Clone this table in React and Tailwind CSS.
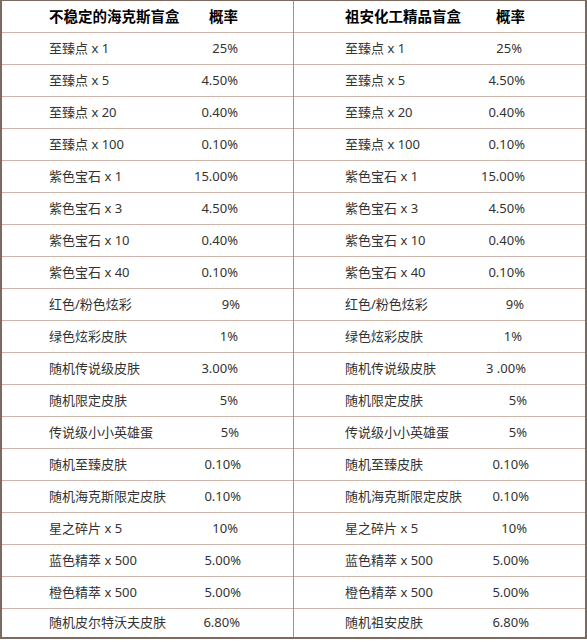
import React from 'react';

// [label, pct, right-edge tweak]
const leftRows = [
  ['至臻点 x 1', '25%', ''],
  ['至臻点 x 5', '4.50%', ''],
  ['至臻点 x 20', '0.40%', ''],
  ['至臻点 x 100', '0.10%', ''],
  ['紫色宝石 x 1', '15.00%', ''],
  ['紫色宝石 x 3', '4.50%', ''],
  ['紫色宝石 x 10', '0.40%', ''],
  ['紫色宝石 x 40', '0.10%', ''],
  ['红色/粉色炫彩', '9%', '-mr-[2px]'],
  ['绿色炫彩皮肤', '1%', ''],
  ['随机传说级皮肤', '3.00%', ''],
  ['随机限定皮肤', '5%', ''],
  ['传说级小小英雄蛋', '5%', '-mr-[1px]'],
  ['随机至臻皮肤', '0.10%', '-mr-[3px]'],
  ['随机海克斯限定皮肤', '0.10%', '-mr-[3px]'],
  ['星之碎片 x 5', '10%', ''],
  ['蓝色精萃 x 500', '5.00%', '-mr-[3px]'],
  ['橙色精萃 x 500', '5.00%', '-mr-[3px]'],
  ['随机皮尔特沃夫皮肤', '6.80%', '-mr-[2px]'],
];

const rightRows = [
  ['至臻点 x 1', '25%', 'mr-[3px]'],
  ['至臻点 x 5', '4.50%', ''],
  ['至臻点 x 20', '0.40%', ''],
  ['至臻点 x 100', '0.10%', ''],
  ['紫色宝石 x 1', '15.00%', ''],
  ['紫色宝石 x 3', '4.50%', ''],
  ['紫色宝石 x 10', '0.40%', ''],
  ['紫色宝石 x 40', '0.10%', ''],
  ['红色/粉色炫彩', '9%', 'mr-[1px]'],
  ['绿色炫彩皮肤', '1%', 'mr-[3px]'],
  ['随机传说级皮肤', '3 .00%', '-mr-[1px]'],
  ['随机限定皮肤', '5%', '-mr-[2px]'],
  ['传说级小小英雄蛋', '5%', '-mr-[2px]'],
  ['随机至臻皮肤', '0.10%', '-mr-[4px]'],
  ['随机海克斯限定皮肤', '0.10%', '-mr-[4px]'],
  ['星之碎片 x 5', '10%', '-mr-[2px]'],
  ['蓝色精萃 x 500', '5.00%', '-mr-[4px]'],
  ['橙色精萃 x 500', '5.00%', '-mr-[4px]'],
  ['随机祖安皮肤', '6.80%', '-mr-[4px]'],
];

function OddsTable({ title, rows, padL, padR }) {
  return (
    <div className="flex flex-col">
      <div className={`flex items-center h-[32px] border-b border-[#ccb5aa] ${padL} ${padR}`}>
        <span className="flex-1 text-[14.5px] font-bold text-black">{title}</span>
        <span className="text-[14.5px] font-bold text-black">概率</span>
      </div>
      {rows.map(([label, pct, adj], i) => (
        <div
          key={i}
          className={`flex items-center ${padL} ${padR} ${
            i === rows.length - 1 ? 'h-[28px]' : 'h-[32px] border-b border-[#ccb5aa]'
          }`}
        >
          <span className="flex-1 text-[13px] text-[#333]">{label}</span>
          <span className={`text-[13px] text-[#333] whitespace-pre ${adj}`}>{pct}</span>
        </div>
      ))}
    </div>
  );
}

export default function App() {
  return (
    <div
      className="w-[587px] h-[642px] bg-white overflow-hidden"
      style={{ fontFamily: '"Noto Sans", "Noto Sans CJK SC", sans-serif' }}
    >
      <div className="w-[587px] border-2 border-t border-[#7d6a5e] grid grid-cols-[291px_1px_291px]">
        <OddsTable title="不稳定的海克斯盲盒" rows={leftRows} padL="pl-[47px]" padR="pr-[55px]" />
        <div className="bg-[#a0938e]" />
        <OddsTable title="祖安化工精品盲盒" rows={rightRows} padL="pl-[51px]" padR="pr-[60px]" />
      </div>
    </div>
  );
}
